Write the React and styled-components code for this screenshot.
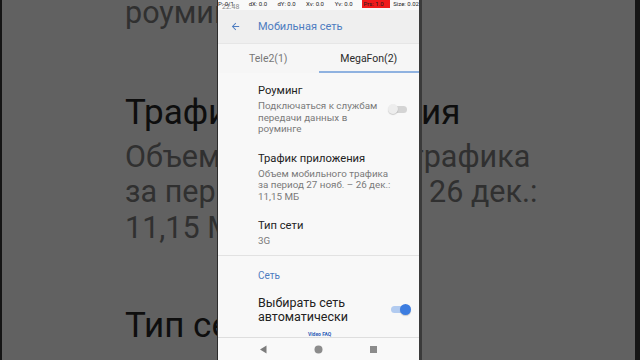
import styled, { createGlobalStyle } from "styled-components";

const GlobalStyle = createGlobalStyle`
  html, body {
    margin: 0;
    padding: 0;
    background: #111;
  }
  body {
    font-family: Roboto, "Noto Sans", "Liberation Sans", sans-serif;
  }
`;

const Stage = styled.div`
  width: 640px;
  height: 360px;
  box-sizing: border-box;
  border-left: 2px solid #151515;
  border-right: 5px solid #151515;
  background: #616161;
  overflow: hidden;
  display: grid;
  grid-template-columns: 1fr;
  grid-template-rows: 360px;
`;

/* blown-up copy of the video behind the phone */
const Backdrop = styled.div`
  grid-area: 1 / 1;
  padding-left: 123px;
  display: flex;
  flex-direction: column;
  align-items: flex-start;
  white-space: nowrap;
`;

const BigTitle = styled.div`
  font-size: 35px;
  line-height: 40px;
  color: #0e0e0e;
  margin-top: ${(p) => p.$gap || 0}px;
`;

const BigText = styled.div`
  font-size: 30.5px;
  line-height: 35.5px;
  color: #303030;
  margin-top: ${(p) => p.$gap || 0}px;
`;

const Phone = styled.div`
  grid-area: 1 / 1;
  justify-self: start;
  margin-left: 215px;
  width: 201px;
  height: 360px;
  border-left: 1px solid #2c2c2c;
  border-right: 3px solid #3a3a3a;
  background: #f7f7f7;
  display: flex;
  flex-direction: column;
  position: relative;
  z-index: 1;
  overflow: hidden;
`;

const StatusBar = styled.div`
  height: 10px;
  flex-shrink: 0;
  position: relative;
  background: #f9f9f9;
  display: grid;
  grid-template-columns: repeat(7, 1fr);
  font-size: 6px;
  line-height: 8px;
  color: #1e1e1e;
  white-space: nowrap;

  & .time {
    position: absolute;
    left: 4px;
    top: 3px;
    font-size: 7px;
    color: #8a8a8a;
  }
`;

const Cell = styled.span`
  position: relative;
  z-index: 1;
  padding-left: ${(p) => p.$pl || 0}px;
  background: ${(p) => (p.$hot ? "#f01c1c" : "transparent")};
  height: 8px;
`;

const AppBar = styled.div`
  height: 34px;
  flex-shrink: 0;
  background: #efefef;
  display: flex;
  align-items: center;
  padding-left: 12px;
  gap: 17px;
  color: #4d7cc0;
  font-size: 11px;
  border-bottom: 1px solid #e6e6e6;
  box-sizing: border-box;
`;

const Tabs = styled.div`
  height: 29px;
  flex-shrink: 0;
  display: grid;
  grid-template-columns: 1fr 1fr;
  background: #f6f6f6;
`;

const Tab = styled.div`
  display: flex;
  align-items: center;
  justify-content: center;
  font-size: 10.5px;
  color: ${(p) => (p.$active ? "#2a2a2a" : "#777")};
  border-bottom: 2px solid ${(p) => (p.$active ? "#8fb2e0" : "transparent")};
  padding-top: 1px;
`;

const List = styled.div`
  flex: 1;
  min-height: 0;
  padding-top: 2px;
  background: #f8f8f8;
  overflow: hidden;
`;

const Pref = styled.div`
  display: flex;
  align-items: center;
  padding: 9px 0 8px 40px;
`;

const PrefText = styled.div`
  flex: 1;
  white-space: nowrap;
`;

const PrefTitle = styled.div`
  font-size: ${(p) => (p.$big ? 12.5 : 11.2)}px;
  line-height: 14px;
  color: #222;
`;

const PrefSummary = styled.div`
  margin-top: 2px;
  font-size: 9.8px;
  line-height: 11.5px;
  color: #7a7a7a;
`;

const Switch = styled.span`
  position: relative;
  flex-shrink: 0;
  width: 16px;
  height: 7px;
  border-radius: 4px;
  margin-right: 12px;
  background: ${(p) => (p.$on ? "#b2cbf0" : "#d4d4d4")};

  &::after {
    content: "";
    position: absolute;
    top: ${(p) => (p.$on ? -2 : -1.5)}px;
    left: ${(p) => (p.$on ? 9 : -3)}px;
    width: ${(p) => (p.$on ? 11 : 10)}px;
    height: ${(p) => (p.$on ? 11 : 10)}px;
    border-radius: 50%;
    background: ${(p) => (p.$on ? "#3d7de0" : "#ededed")};
    box-shadow: 0 1px 1px rgba(0, 0, 0, 0.18);
  }
`;

const Divider = styled.div`
  height: 1px;
  background: #e2e2e2;
`;

const Category = styled.div`
  padding: 14px 0 5px 40px;
  font-size: 10px;
  line-height: 12px;
  color: #4d7cc0;
`;

const FaqMark = styled.span`
  position: absolute;
  left: 90px;
  top: 331px;
  font-size: 5px;
  font-weight: 700;
  color: #2f5fb8;
  z-index: 2;
`;

const NavBar = styled.div`
  height: 23px;
  flex-shrink: 0;
  box-sizing: border-box;
  border-top: 1px solid #dedede;
  background: #f9f9f9;
  display: grid;
  grid-template-columns: repeat(3, 55px);
  justify-content: center;
  align-items: center;
  justify-items: center;
`;

const BackArrow = () => (
  <svg width="11" height="11" viewBox="0 0 24 24" fill="#4d7cc0">
    <path d="M20 11H7.83l5.59-5.59L12 4l-8 8 8 8 1.41-1.41L7.83 13H20v-2z" />
  </svg>
);

const NavIcon = ({ kind }) => (
  <svg width="9" height="9" viewBox="0 0 9 9">
    {kind === "back" && <path d="M7.5 0.5 L7.5 8.5 L1 4.5 Z" fill="#7c7c7c" />}
    {kind === "home" && <circle cx="4.5" cy="4.5" r="4" fill="#8c8c8c" />}
    {kind === "recent" && <rect x="1" y="1" width="7" height="7" fill="#8c8c8c" />}
  </svg>
);

export default function App() {
  return (
    <>
      <GlobalStyle />
      <Stage>
        <Backdrop>
          <BigText $gap={-5}>роуминге</BigText>
          <BigTitle $gap={62}>Трафик приложения</BigTitle>
          <BigText $gap={6}>Объем мобильного трафика</BigText>
          <BigText>за период 27 нояб. – 26 дек.:</BigText>
          <BigText>11,15 МБ</BigText>
          <BigTitle $gap={61}>Тип сети</BigTitle>
          <BigText $gap={10}>3G</BigText>
        </Backdrop>

        <Phone>
          <StatusBar>
            <span className="time">22:48</span>
            <Cell>P: 0/1</Cell>
            <Cell $pl={2}>dX: 0.0</Cell>
            <Cell $pl={2}>dY: 0.0</Cell>
            <Cell $pl={2}>Xv: 0.0</Cell>
            <Cell $pl={2}>Yv: 0.0</Cell>
            <Cell $hot $pl={2}>Prs: 1.0</Cell>
            <Cell $pl={3}>Size: 0.02</Cell>
          </StatusBar>

          <AppBar>
            <BackArrow />
            <span>Мобильная сеть</span>
          </AppBar>

          <Tabs>
            <Tab>Tele2(1)</Tab>
            <Tab $active>MegaFon(2)</Tab>
          </Tabs>

          <List>
            <Pref>
              <PrefText>
                <PrefTitle>Роуминг</PrefTitle>
                <PrefSummary>
                  Подключаться к службам
                  <br />
                  передачи данных в
                  <br />
                  роуминге
                </PrefSummary>
              </PrefText>
              <Switch />
            </Pref>
            <Pref>
              <PrefText>
                <PrefTitle>Трафик приложения</PrefTitle>
                <PrefSummary>
                  Объем мобильного трафика
                  <br />
                  за период 27 нояб. – 26 дек.:
                  <br />
                  11,15 МБ
                </PrefSummary>
              </PrefText>
            </Pref>
            <Pref>
              <PrefText>
                <PrefTitle>Тип сети</PrefTitle>
                <PrefSummary>3G</PrefSummary>
              </PrefText>
            </Pref>
            <Divider />
            <Category>Сеть</Category>
            <Pref>
              <PrefText>
                <PrefTitle $big>
                  Выбирать сеть
                  <br />
                  автоматически
                </PrefTitle>
              </PrefText>
              <Switch $on />
            </Pref>
          </List>

          <FaqMark>Video FAQ</FaqMark>

          <NavBar>
            <NavIcon kind="back" />
            <NavIcon kind="home" />
            <NavIcon kind="recent" />
          </NavBar>
        </Phone>
      </Stage>
    </>
  );
}
